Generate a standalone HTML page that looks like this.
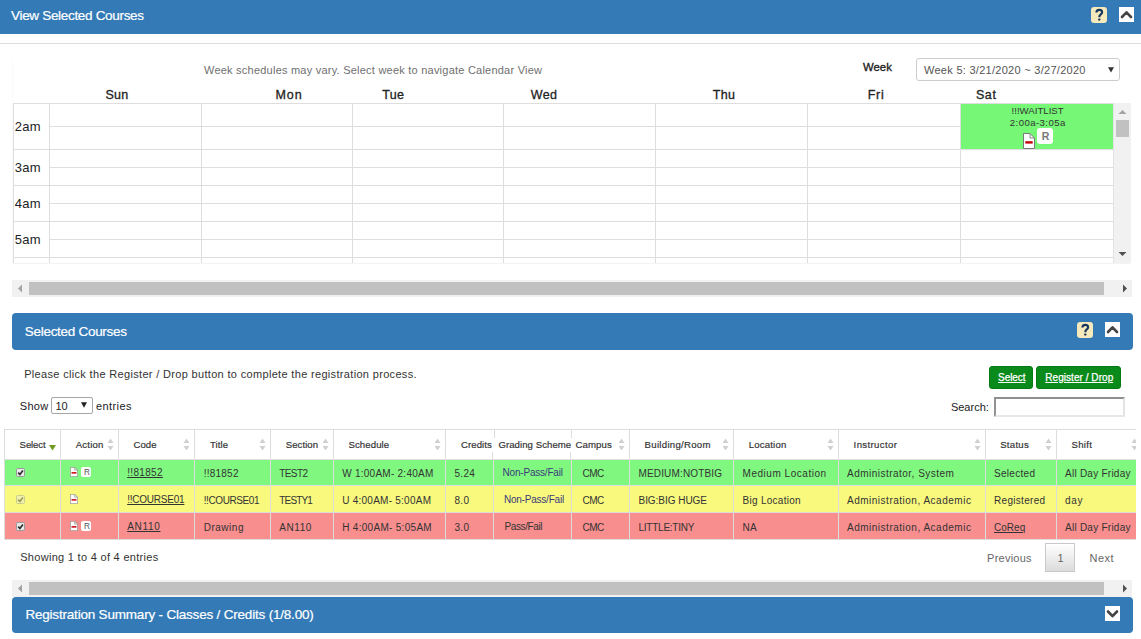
<!DOCTYPE html>
<html><head><meta charset="utf-8">
<style>
*{box-sizing:border-box;margin:0;padding:0}
html,body{width:1141px;height:639px;overflow:hidden;background:#fff;font-family:"Liberation Sans",sans-serif;color:#333;position:relative}
.abs{position:absolute}
.t{position:absolute;white-space:nowrap;line-height:1}
svg{display:block}
</style></head><body>
<div class="abs" style="left:0px;top:0px;width:1141px;height:34px;background:#337ab7"></div>
<div class="t" style="left:11px;top:9px;font-size:13.5px;color:#fff;font-weight:400;letter-spacing:-0.316px;-webkit-text-stroke:0.2px currentColor;">View Selected Courses</div>
<div class="abs" style="left:1091px;top:7px;width:16px;height:16px;background:#f6e9bb;border-radius:3px"></div>
<svg class="abs" style="left:1091px;top:7px" width="16" height="16" viewBox="0 0 16 16"><path d="M5.4 5.6 C5.4 3.8 6.6 2.9 8.3 2.9 C10 2.9 11.1 3.9 11.1 5.3 C11.1 6.5 10.4 7.1 9.5 7.7 C8.6 8.3 8.3 8.8 8.3 10.2" fill="none" stroke="#17375e" stroke-width="2.2"/><ellipse cx="8.3" cy="12.6" rx="1.3" ry="1.15" fill="#17375e"/></svg>
<div class="abs" style="left:1119px;top:7px;width:15px;height:15px;background:#fff"><svg width="15" height="15" viewBox="0 0 15 15"><path d="M3 10 L7.5 5.3 L12 10" fill="none" stroke="#444" stroke-width="2.6" stroke-linecap="round" stroke-linejoin="round"/></svg></div>
<div class="abs" style="left:0px;top:43px;width:1141px;height:1px;background:#ddd"></div>
<div class="abs" style="left:12px;top:58px;width:1px;height:205px;background:#fafafa"></div>
<div class="t" style="left:204px;top:65px;font-size:11px;color:#6f6f6f;font-weight:400;letter-spacing:0.228px;">Week schedules may vary. Select week to navigate Calendar View</div>
<div class="t" style="left:863px;top:62px;font-size:11.3px;color:#222;font-weight:400;letter-spacing:0.038px;-webkit-text-stroke:0.35px currentColor;">Week</div>
<div class="abs" style="left:916px;top:58px;width:204px;height:23px;border:1px solid #ccc;border-radius:3px;background:#fff"></div>
<div class="t" style="left:924px;top:65px;font-size:11px;color:#555;font-weight:400;letter-spacing:0.281px;">Week 5: 3/21/2020 ~ 3/27/2020</div>
<svg class="abs" style="left:1108px;top:67px" width="6" height="6" viewBox="0 0 6 6"><path d="M0 0.3 H6 L3 5.6 Z" fill="#333"/></svg>
<div class="t" style="left:105.5px;top:89px;font-size:12.5px;color:#222;font-weight:400;letter-spacing:0.275px;-webkit-text-stroke:0.3px currentColor;">Sun</div>
<div class="t" style="left:275.4px;top:89px;font-size:12.5px;color:#222;font-weight:400;letter-spacing:1.036px;-webkit-text-stroke:0.3px currentColor;">Mon</div>
<div class="t" style="left:382.3px;top:89px;font-size:12.5px;color:#222;font-weight:400;letter-spacing:0.261px;-webkit-text-stroke:0.3px currentColor;">Tue</div>
<div class="t" style="left:530.8px;top:89px;font-size:12.5px;color:#222;font-weight:400;letter-spacing:0.358px;-webkit-text-stroke:0.3px currentColor;">Wed</div>
<div class="t" style="left:712.7px;top:89px;font-size:12.5px;color:#222;font-weight:400;letter-spacing:0.327px;-webkit-text-stroke:0.3px currentColor;">Thu</div>
<div class="t" style="left:867.7px;top:89px;font-size:12.5px;color:#222;font-weight:400;letter-spacing:0.711px;-webkit-text-stroke:0.3px currentColor;">Fri</div>
<div class="t" style="left:975.9px;top:89px;font-size:12.5px;color:#222;font-weight:400;letter-spacing:0.617px;-webkit-text-stroke:0.3px currentColor;">Sat</div>
<div class="abs" style="left:960px;top:104px;width:153px;height:45px;background:#76f776"></div>
<div class="abs" style="left:13px;top:103px;width:1100px;height:1px;background:#dedede"></div>
<div class="abs" style="left:49px;top:126px;width:911px;height:1px;background:#dedede"></div>
<div class="abs" style="left:13px;top:149px;width:1100px;height:1px;background:#dedede"></div>
<div class="abs" style="left:49px;top:167px;width:1064px;height:1px;background:#dedede"></div>
<div class="abs" style="left:49px;top:203px;width:1064px;height:1px;background:#dedede"></div>
<div class="abs" style="left:49px;top:239px;width:1064px;height:1px;background:#dedede"></div>
<div class="abs" style="left:13px;top:185px;width:1100px;height:1px;background:#dedede"></div>
<div class="abs" style="left:13px;top:221px;width:1100px;height:1px;background:#dedede"></div>
<div class="abs" style="left:13px;top:257px;width:1100px;height:1px;background:#dedede"></div>
<div class="abs" style="left:13px;top:103px;width:1px;height:160px;background:#dedede"></div>
<div class="abs" style="left:49px;top:103px;width:1px;height:160px;background:#dedede"></div>
<div class="abs" style="left:201px;top:103px;width:1px;height:160px;background:#dedede"></div>
<div class="abs" style="left:352px;top:103px;width:1px;height:160px;background:#dedede"></div>
<div class="abs" style="left:503px;top:103px;width:1px;height:160px;background:#dedede"></div>
<div class="abs" style="left:655px;top:103px;width:1px;height:160px;background:#dedede"></div>
<div class="abs" style="left:807px;top:103px;width:1px;height:160px;background:#dedede"></div>
<div class="abs" style="left:960px;top:103px;width:1px;height:160px;background:#dedede"></div>
<div class="abs" style="left:13px;top:263px;width:1117px;height:1px;background:#f3f3f3"></div>
<div class="t" style="left:14.7px;top:120px;font-size:13px;color:#222;font-weight:400;letter-spacing:0.252px;">2am</div>
<div class="t" style="left:14.7px;top:161px;font-size:13px;color:#222;font-weight:400;letter-spacing:0.252px;">3am</div>
<div class="t" style="left:14.7px;top:197px;font-size:13px;color:#222;font-weight:400;letter-spacing:0.252px;">4am</div>
<div class="t" style="left:14.7px;top:233px;font-size:13px;color:#222;font-weight:400;letter-spacing:0.252px;">5am</div>
<div class="t" style="left:1011.6px;top:106px;font-size:9.6px;color:#333;font-weight:400;letter-spacing:0.011px;">!!!WAITLIST</div>
<div class="t" style="left:1009.8px;top:118px;font-size:9.6px;color:#333;font-weight:400;letter-spacing:0.428px;">2:00a-3:05a</div>
<div class="abs" style="left:1023px;top:133px"><svg width="12" height="16" viewBox="0 0 12 16" preserveAspectRatio="none"><path d="M0.5 0.5 H7 L11.5 5 V15.5 H0.5 Z" fill="#fff" stroke="#7a7a7a" stroke-width="1"/><path d="M7 0.5 V5 H11.5" fill="none" stroke="#8a8a8a" stroke-width="1"/><rect x="2.3" y="8.2" width="7.4" height="2.4" fill="#c8000a"/></svg></div>
<div class="abs" style="left:1037px;top:128px;width:16px;height:16px;background:#fff;border-radius:3px"></div>
<div class="t" style="left:1041.8px;top:131px;font-size:10.5px;color:#777;font-weight:700;">R</div>
<div class="abs" style="left:1113px;top:103px;width:18px;height:160px;background:#f1f1f1"></div>
<div class="abs" style="left:1113px;top:103px;width:1px;height:160px;background:#e3e3e3"></div>
<div class="abs" style="left:1116px;top:120px;width:13px;height:17px;background:#c1c1c1"></div>
<svg class="abs" style="left:1118px;top:109px" width="9" height="6" viewBox="0 0 9 6"><path d="M0.5 5 L4.5 1 L8.5 5 Z" fill="#a3a3a3"/></svg>
<svg class="abs" style="left:1118px;top:251px" width="9" height="6" viewBox="0 0 9 6"><path d="M0.5 1 L4.5 5 L8.5 1 Z" fill="#505050"/></svg>
<div class="abs" style="left:12px;top:280px;width:1120px;height:17px;background:#f1f1f1"></div>
<div class="abs" style="left:29px;top:282px;width:1075px;height:13px;background:#c1c1c1"></div>
<svg class="abs" style="left:17px;top:284px" width="6" height="9" viewBox="0 0 6 9"><path d="M5 0.5 L1 4.5 L5 8.5 Z" fill="#a3a3a3"/></svg>
<svg class="abs" style="left:1122px;top:284px" width="6" height="9" viewBox="0 0 6 9"><path d="M1 0.5 L5 4.5 L1 8.5 Z" fill="#505050"/></svg>
<div class="abs" style="left:12px;top:313px;width:1121px;height:37px;background:#337ab7;border-radius:4px"></div>
<div class="t" style="left:24.8px;top:325px;font-size:13.5px;color:#fff;font-weight:400;letter-spacing:-0.291px;-webkit-text-stroke:0.2px currentColor;">Selected Courses</div>
<div class="abs" style="left:1077px;top:322px;width:16px;height:16px;background:#f6e9bb;border-radius:3px"></div>
<svg class="abs" style="left:1077px;top:322px" width="16" height="16" viewBox="0 0 16 16"><path d="M5.4 5.6 C5.4 3.8 6.6 2.9 8.3 2.9 C10 2.9 11.1 3.9 11.1 5.3 C11.1 6.5 10.4 7.1 9.5 7.7 C8.6 8.3 8.3 8.8 8.3 10.2" fill="none" stroke="#17375e" stroke-width="2.2"/><ellipse cx="8.3" cy="12.6" rx="1.3" ry="1.15" fill="#17375e"/></svg>
<div class="abs" style="left:1105px;top:322px;width:15px;height:15px;background:#fff"><svg width="15" height="15" viewBox="0 0 15 15"><path d="M3 10 L7.5 5.3 L12 10" fill="none" stroke="#444" stroke-width="2.6" stroke-linecap="round" stroke-linejoin="round"/></svg></div>
<div class="t" style="left:24.2px;top:369px;font-size:11px;color:#333;font-weight:400;letter-spacing:0.328px;">Please click the Register / Drop button to complete the registration process.</div>
<div class="abs" style="left:989px;top:366px;width:44px;height:23px;background:#0a8a1a;border-radius:3px;border:1px solid #067a14"></div>
<div class="t" style="left:998.1px;top:373px;font-size:10px;color:#fff;font-weight:400;letter-spacing:-0.079px;-webkit-text-stroke:0.25px currentColor;text-decoration:underline">Select</div>
<div class="abs" style="left:1036px;top:366px;width:85px;height:23px;background:#0a8a1a;border-radius:3px;border:1px solid #067a14"></div>
<div class="t" style="left:1045.3px;top:373px;font-size:10px;color:#fff;font-weight:400;letter-spacing:0.046px;-webkit-text-stroke:0.25px currentColor;text-decoration:underline">Register / Drop</div>
<div class="t" style="left:19.7px;top:401px;font-size:11px;color:#222;font-weight:400;letter-spacing:0.356px;">Show</div>
<div class="abs" style="left:51px;top:397px;width:42px;height:17px;border:1px solid #a6a6a6;border-radius:2px;background:#fff"></div>
<div class="t" style="left:55.5px;top:401px;font-size:11px;color:#222;font-weight:400;">10</div>
<svg class="abs" style="left:81px;top:402px" width="6" height="6" viewBox="0 0 6 6"><path d="M0 0.2 H6 L3 5.8 Z" fill="#222"/></svg>
<div class="t" style="left:96px;top:401px;font-size:11px;color:#222;font-weight:400;letter-spacing:0.411px;">entries</div>
<div class="t" style="left:950.9px;top:402px;font-size:11px;color:#222;font-weight:400;letter-spacing:0.013px;">Search:</div>
<div class="abs" style="left:994px;top:397px;width:131px;height:20px;border-style:solid;border-width:2px 2px 2px 2px;border-color:#8f8f8f #e3e3e3 #e8e8e8 #939393;background:#fff"></div>
<div class="abs" style="left:4px;top:460px;width:1132px;height:25px;background:#80f880"></div>
<div class="abs" style="left:4px;top:486px;width:1132px;height:26px;background:#f9f97e"></div>
<div class="abs" style="left:4px;top:513px;width:1132px;height:26px;background:#f88e8e"></div>
<div class="abs" style="left:4px;top:429px;width:1132px;height:1px;background:#dddddd"></div>
<div class="abs" style="left:4px;top:459px;width:1132px;height:1px;background:#dddddd"></div>
<div class="abs" style="left:4px;top:485px;width:1132px;height:1px;background:#dddddd"></div>
<div class="abs" style="left:4px;top:512px;width:1132px;height:1px;background:#dddddd"></div>
<div class="abs" style="left:4px;top:539px;width:1132px;height:1px;background:#dddddd"></div>
<div class="abs" style="left:4px;top:429px;width:1px;height:111px;background:#dddddd"></div>
<div class="abs" style="left:60px;top:429px;width:1px;height:111px;background:#dddddd"></div>
<div class="abs" style="left:118px;top:429px;width:1px;height:111px;background:#dddddd"></div>
<div class="abs" style="left:194px;top:429px;width:1px;height:111px;background:#dddddd"></div>
<div class="abs" style="left:270px;top:429px;width:1px;height:111px;background:#dddddd"></div>
<div class="abs" style="left:333px;top:429px;width:1px;height:111px;background:#dddddd"></div>
<div class="abs" style="left:445px;top:429px;width:1px;height:111px;background:#dddddd"></div>
<div class="abs" style="left:629px;top:429px;width:1px;height:111px;background:#dddddd"></div>
<div class="abs" style="left:733px;top:429px;width:1px;height:111px;background:#dddddd"></div>
<div class="abs" style="left:838px;top:429px;width:1px;height:111px;background:#dddddd"></div>
<div class="abs" style="left:985px;top:429px;width:1px;height:111px;background:#dddddd"></div>
<div class="abs" style="left:1056px;top:429px;width:1px;height:111px;background:#dddddd"></div>
<div class="abs" style="left:494px;top:429px;width:1px;height:9px;background:#dddddd"></div>
<div class="abs" style="left:492px;top:452px;width:1px;height:8px;background:#dddddd"></div>
<div class="abs" style="left:493px;top:460px;width:1px;height:80px;background:#dddddd"></div>
<div class="abs" style="left:571px;top:429px;width:1px;height:9px;background:#dddddd"></div>
<div class="abs" style="left:570px;top:452px;width:1px;height:8px;background:#dddddd"></div>
<div class="abs" style="left:571px;top:460px;width:1px;height:80px;background:#dddddd"></div>
<div class="t" style="left:19.6px;top:440px;font-size:9.6px;color:#333;font-weight:400;letter-spacing:-0.114px;-webkit-text-stroke:0.18px currentColor;">Select</div>
<div class="t" style="left:75.7px;top:440px;font-size:9.6px;color:#333;font-weight:400;letter-spacing:0.206px;-webkit-text-stroke:0.18px currentColor;">Action</div>
<div class="t" style="left:133.6px;top:440px;font-size:9.6px;color:#333;font-weight:400;letter-spacing:-0.013px;-webkit-text-stroke:0.18px currentColor;">Code</div>
<div class="t" style="left:210px;top:440px;font-size:9.6px;color:#333;font-weight:400;letter-spacing:0.080px;-webkit-text-stroke:0.18px currentColor;">Title</div>
<div class="t" style="left:285.7px;top:440px;font-size:9.6px;color:#333;font-weight:400;letter-spacing:0.067px;-webkit-text-stroke:0.18px currentColor;">Section</div>
<div class="t" style="left:348.4px;top:440px;font-size:9.6px;color:#333;font-weight:400;letter-spacing:0.112px;-webkit-text-stroke:0.18px currentColor;">Schedule</div>
<div class="t" style="left:461px;top:440px;font-size:9.6px;color:#333;font-weight:400;letter-spacing:0.068px;-webkit-text-stroke:0.18px currentColor;">Credits</div>
<div class="t" style="left:498.4px;top:440px;font-size:9.6px;color:#333;font-weight:400;letter-spacing:0.062px;-webkit-text-stroke:0.18px currentColor;">Grading Scheme</div>
<div class="t" style="left:575.4px;top:440px;font-size:9.6px;color:#333;font-weight:400;letter-spacing:0.153px;-webkit-text-stroke:0.18px currentColor;">Campus</div>
<div class="t" style="left:644.6px;top:440px;font-size:9.6px;color:#333;font-weight:400;letter-spacing:0.291px;-webkit-text-stroke:0.18px currentColor;">Building/Room</div>
<div class="t" style="left:748.7px;top:440px;font-size:9.6px;color:#333;font-weight:400;letter-spacing:0.188px;-webkit-text-stroke:0.18px currentColor;">Location</div>
<div class="t" style="left:853.6px;top:440px;font-size:9.6px;color:#333;font-weight:400;letter-spacing:0.367px;-webkit-text-stroke:0.18px currentColor;">Instructor</div>
<div class="t" style="left:1000.2px;top:440px;font-size:9.6px;color:#333;font-weight:400;letter-spacing:0.279px;-webkit-text-stroke:0.18px currentColor;">Status</div>
<div class="t" style="left:1071.5px;top:440px;font-size:9.6px;color:#333;font-weight:400;letter-spacing:0.274px;-webkit-text-stroke:0.18px currentColor;">Shift</div>
<svg class="abs" style="left:107px;top:438px" width="7" height="13" viewBox="0 0 7 13"><path d="M0.5 5 L3.5 0.5 L6.5 5 Z M0.5 8 L3.5 12.5 L6.5 8 Z" fill="#d0d0d0"/></svg>
<svg class="abs" style="left:183px;top:438px" width="7" height="13" viewBox="0 0 7 13"><path d="M0.5 5 L3.5 0.5 L6.5 5 Z M0.5 8 L3.5 12.5 L6.5 8 Z" fill="#d0d0d0"/></svg>
<svg class="abs" style="left:259px;top:438px" width="7" height="13" viewBox="0 0 7 13"><path d="M0.5 5 L3.5 0.5 L6.5 5 Z M0.5 8 L3.5 12.5 L6.5 8 Z" fill="#d0d0d0"/></svg>
<svg class="abs" style="left:322px;top:438px" width="7" height="13" viewBox="0 0 7 13"><path d="M0.5 5 L3.5 0.5 L6.5 5 Z M0.5 8 L3.5 12.5 L6.5 8 Z" fill="#d0d0d0"/></svg>
<svg class="abs" style="left:434px;top:438px" width="7" height="13" viewBox="0 0 7 13"><path d="M0.5 5 L3.5 0.5 L6.5 5 Z M0.5 8 L3.5 12.5 L6.5 8 Z" fill="#d0d0d0"/></svg>
<svg class="abs" style="left:618px;top:438px" width="7" height="13" viewBox="0 0 7 13"><path d="M0.5 5 L3.5 0.5 L6.5 5 Z M0.5 8 L3.5 12.5 L6.5 8 Z" fill="#d0d0d0"/></svg>
<svg class="abs" style="left:722px;top:438px" width="7" height="13" viewBox="0 0 7 13"><path d="M0.5 5 L3.5 0.5 L6.5 5 Z M0.5 8 L3.5 12.5 L6.5 8 Z" fill="#d0d0d0"/></svg>
<svg class="abs" style="left:827px;top:438px" width="7" height="13" viewBox="0 0 7 13"><path d="M0.5 5 L3.5 0.5 L6.5 5 Z M0.5 8 L3.5 12.5 L6.5 8 Z" fill="#d0d0d0"/></svg>
<svg class="abs" style="left:974px;top:438px" width="7" height="13" viewBox="0 0 7 13"><path d="M0.5 5 L3.5 0.5 L6.5 5 Z M0.5 8 L3.5 12.5 L6.5 8 Z" fill="#d0d0d0"/></svg>
<svg class="abs" style="left:1045px;top:438px" width="7" height="13" viewBox="0 0 7 13"><path d="M0.5 5 L3.5 0.5 L6.5 5 Z M0.5 8 L3.5 12.5 L6.5 8 Z" fill="#d0d0d0"/></svg>
<div class="abs" style="left:1131px;top:438px;width:5px;height:13px;overflow:hidden"><svg class="abs" style="left:0px;top:0" width="7" height="13" viewBox="0 0 7 13"><path d="M0.5 5 L3.5 0.5 L6.5 5 Z M0.5 8 L3.5 12.5 L6.5 8 Z" fill="#d0d0d0"/></svg></div>
<svg class="abs" style="left:49px;top:445px" width="7" height="6" viewBox="0 0 7 6"><path d="M0 0 H7 L3.5 5.5 Z" fill="#6f9a1f"/></svg>
<svg class="abs" style="left:16px;top:468px;" width="9" height="9" viewBox="0 0 9 9"><rect x="0.5" y="0.5" width="8" height="8" rx="1.2" fill="#e9e9e9" stroke="#9a9a9a"/><path d="M2.2 4.6 L3.9 6.4 L6.9 2.4" fill="none" stroke="#2a2a2a" stroke-width="1.6"/></svg>
<div class="abs" style="left:70px;top:467px"><svg width="8" height="10" viewBox="0 0 12 16" preserveAspectRatio="none"><path d="M0.5 0.5 H7 L11.5 5 V15.5 H0.5 Z" fill="#fff" stroke="#7a7a7a" stroke-width="1"/><path d="M7 0.5 V5 H11.5" fill="none" stroke="#8a8a8a" stroke-width="1"/><rect x="2.3" y="8.2" width="7.4" height="2.4" fill="#c8000a"/></svg></div>
<div class="abs" style="left:81px;top:467px;width:10px;height:10px;background:#fff;border-radius:2px"></div>
<div class="t" style="left:83.9px;top:468px;font-size:8.3px;color:#555;font-weight:400;">R</div>
<div class="t" style="left:127.2px;top:468px;font-size:10px;color:#333;font-weight:400;letter-spacing:0.337px;text-decoration:underline;text-underline-offset:1px">!!81852</div>
<div class="t" style="left:203.7px;top:469px;font-size:10px;color:#333;font-weight:400;letter-spacing:0.238px;">!!81852</div>
<div class="t" style="left:279.3px;top:469px;font-size:10px;color:#333;font-weight:400;letter-spacing:-0.606px;">TEST2</div>
<div class="t" style="left:342.2px;top:469px;font-size:10px;color:#333;font-weight:400;letter-spacing:0.256px;">W 1:00AM- 2:40AM</div>
<div class="t" style="left:454.5px;top:469px;font-size:10px;color:#333;font-weight:400;letter-spacing:0.277px;">5.24</div>
<div class="t" style="left:502.6px;top:468px;font-size:10px;color:#3b3b7a;font-weight:400;letter-spacing:-0.209px;">Non-Pass/Fail</div>
<div class="t" style="left:582.5px;top:469px;font-size:10px;color:#333;font-weight:400;letter-spacing:-0.541px;">CMC</div>
<div class="t" style="left:638.5px;top:469px;font-size:10px;color:#333;font-weight:400;letter-spacing:0.152px;">MEDIUM:NOTBIG</div>
<div class="t" style="left:742.6px;top:469px;font-size:10px;color:#333;font-weight:400;letter-spacing:0.525px;">Medium Location</div>
<div class="t" style="left:847px;top:469px;font-size:10px;color:#333;font-weight:400;letter-spacing:0.482px;">Administrator, System</div>
<div class="t" style="left:994px;top:469px;font-size:10px;color:#333;font-weight:400;letter-spacing:0.297px;">Selected</div>
<div class="t" style="left:1065px;top:469px;font-size:10px;color:#333;font-weight:400;letter-spacing:0.250px;">All Day Friday</div>
<svg class="abs" style="left:16px;top:495px;opacity:0.45;" width="9" height="9" viewBox="0 0 9 9"><rect x="0.5" y="0.5" width="8" height="8" rx="1.2" fill="#e9e9e9" stroke="#9a9a9a"/><path d="M2.2 4.6 L3.9 6.4 L6.9 2.4" fill="none" stroke="#2a2a2a" stroke-width="1.6"/></svg>
<div class="abs" style="left:70px;top:494px"><svg width="8" height="10" viewBox="0 0 12 16" preserveAspectRatio="none"><path d="M0.5 0.5 H7 L11.5 5 V15.5 H0.5 Z" fill="#fff" stroke="#7a7a7a" stroke-width="1"/><path d="M7 0.5 V5 H11.5" fill="none" stroke="#8a8a8a" stroke-width="1"/><rect x="2.3" y="8.2" width="7.4" height="2.4" fill="#c8000a"/></svg></div>
<div class="t" style="left:127.2px;top:495px;font-size:10px;color:#333;font-weight:400;letter-spacing:-0.230px;text-decoration:underline;text-underline-offset:1px">!!COURSE01</div>
<div class="t" style="left:203.7px;top:496px;font-size:10px;color:#333;font-weight:400;letter-spacing:-0.397px;">!!COURSE01</div>
<div class="t" style="left:279.3px;top:496px;font-size:10px;color:#333;font-weight:400;letter-spacing:-0.839px;">TESTY1</div>
<div class="t" style="left:342.2px;top:496px;font-size:10px;color:#333;font-weight:400;letter-spacing:0.250px;">U 4:00AM- 5:00AM</div>
<div class="t" style="left:454.5px;top:496px;font-size:10px;color:#333;font-weight:400;letter-spacing:0.297px;">8.0</div>
<div class="t" style="left:503.9px;top:495px;font-size:10px;color:#3b3b7a;font-weight:400;letter-spacing:-0.209px;">Non-Pass/Fail</div>
<div class="t" style="left:582.5px;top:496px;font-size:10px;color:#333;font-weight:400;letter-spacing:-0.541px;">CMC</div>
<div class="t" style="left:638.5px;top:496px;font-size:10px;color:#333;font-weight:400;letter-spacing:-0.037px;">BIG:BIG HUGE</div>
<div class="t" style="left:742.6px;top:496px;font-size:10px;color:#333;font-weight:400;letter-spacing:0.268px;">Big Location</div>
<div class="t" style="left:847px;top:496px;font-size:10px;color:#333;font-weight:400;letter-spacing:0.505px;">Administration, Academic</div>
<div class="t" style="left:994px;top:496px;font-size:10px;color:#333;font-weight:400;letter-spacing:0.305px;">Registered</div>
<div class="t" style="left:1065px;top:496px;font-size:10px;color:#333;font-weight:400;letter-spacing:0.738px;">day</div>
<svg class="abs" style="left:16px;top:522px;" width="9" height="9" viewBox="0 0 9 9"><rect x="0.5" y="0.5" width="8" height="8" rx="1.2" fill="#e9e9e9" stroke="#9a9a9a"/><path d="M2.2 4.6 L3.9 6.4 L6.9 2.4" fill="none" stroke="#2a2a2a" stroke-width="1.6"/></svg>
<div class="abs" style="left:70px;top:521px"><svg width="8" height="10" viewBox="0 0 12 16" preserveAspectRatio="none"><path d="M0.5 0.5 H7 L11.5 5 V15.5 H0.5 Z" fill="#fff" stroke="#7a7a7a" stroke-width="1"/><path d="M7 0.5 V5 H11.5" fill="none" stroke="#8a8a8a" stroke-width="1"/><rect x="2.3" y="8.2" width="7.4" height="2.4" fill="#c8000a"/></svg></div>
<div class="abs" style="left:81px;top:521px;width:10px;height:10px;background:#fff;border-radius:2px"></div>
<div class="t" style="left:83.9px;top:522px;font-size:8.3px;color:#555;font-weight:400;">R</div>
<div class="t" style="left:127.2px;top:522px;font-size:10px;color:#333;font-weight:400;letter-spacing:0.689px;text-decoration:underline;text-underline-offset:1px">AN110</div>
<div class="t" style="left:203.7px;top:523px;font-size:10px;color:#333;font-weight:400;letter-spacing:0.519px;">Drawing</div>
<div class="t" style="left:279.3px;top:523px;font-size:10px;color:#333;font-weight:400;letter-spacing:0.564px;">AN110</div>
<div class="t" style="left:342.2px;top:523px;font-size:10px;color:#333;font-weight:400;letter-spacing:0.297px;">H 4:00AM- 5:05AM</div>
<div class="t" style="left:454.5px;top:523px;font-size:10px;color:#333;font-weight:400;letter-spacing:0.297px;">3.0</div>
<div class="t" style="left:504.4px;top:522px;font-size:10px;color:#333;font-weight:400;letter-spacing:-0.366px;">Pass/Fail</div>
<div class="t" style="left:582.5px;top:523px;font-size:10px;color:#333;font-weight:400;letter-spacing:-0.541px;">CMC</div>
<div class="t" style="left:638.5px;top:523px;font-size:10px;color:#333;font-weight:400;letter-spacing:-0.246px;">LITTLE:TINY</div>
<div class="t" style="left:742.6px;top:523px;font-size:10px;color:#333;font-weight:400;letter-spacing:0.094px;">NA</div>
<div class="t" style="left:847px;top:523px;font-size:10px;color:#333;font-weight:400;letter-spacing:0.505px;">Administration, Academic</div>
<div class="t" style="left:994px;top:523px;font-size:10px;color:#333;font-weight:400;letter-spacing:0.040px;text-decoration:underline">CoReq</div>
<div class="t" style="left:1065px;top:523px;font-size:10px;color:#333;font-weight:400;letter-spacing:0.250px;">All Day Friday</div>
<div class="t" style="left:20.2px;top:552px;font-size:11px;color:#333;font-weight:400;letter-spacing:0.298px;">Showing 1 to 4 of 4 entries</div>
<div class="t" style="left:987.1px;top:553px;font-size:11px;color:#666;font-weight:400;letter-spacing:0.243px;">Previous</div>
<div class="abs" style="left:1045px;top:543px;width:30px;height:29px;border:1px solid #c9c9c9;background:linear-gradient(#fff,#dcdcdc)"></div>
<div class="t" style="left:1057.5px;top:553px;font-size:11px;color:#666;font-weight:400;">1</div>
<div class="t" style="left:1089.6px;top:553px;font-size:11px;color:#666;font-weight:400;letter-spacing:0.458px;">Next</div>
<div class="abs" style="left:12px;top:580px;width:1120px;height:17px;background:#f1f1f1"></div>
<div class="abs" style="left:29px;top:582px;width:1075px;height:13px;background:#c1c1c1"></div>
<svg class="abs" style="left:17px;top:584px" width="6" height="9" viewBox="0 0 6 9"><path d="M5 0.5 L1 4.5 L5 8.5 Z" fill="#a3a3a3"/></svg>
<svg class="abs" style="left:1122px;top:584px" width="6" height="9" viewBox="0 0 6 9"><path d="M1 0.5 L5 4.5 L1 8.5 Z" fill="#505050"/></svg>
<div class="abs" style="left:12px;top:597px;width:1121px;height:36px;background:#337ab7;border-radius:4px"></div>
<div class="t" style="left:25.4px;top:608px;font-size:13.5px;color:#fff;font-weight:400;letter-spacing:-0.197px;-webkit-text-stroke:0.2px currentColor;">Registration Summary - Classes / Credits (1/8.00)</div>
<div class="abs" style="left:1105px;top:606px;width:15px;height:15px;background:#fff"><svg width="15" height="15" viewBox="0 0 15 15"><path d="M3 5.5 L7.5 10.2 L12 5.5" fill="none" stroke="#444" stroke-width="2.6" stroke-linecap="round" stroke-linejoin="round"/></svg></div>
</body></html>
